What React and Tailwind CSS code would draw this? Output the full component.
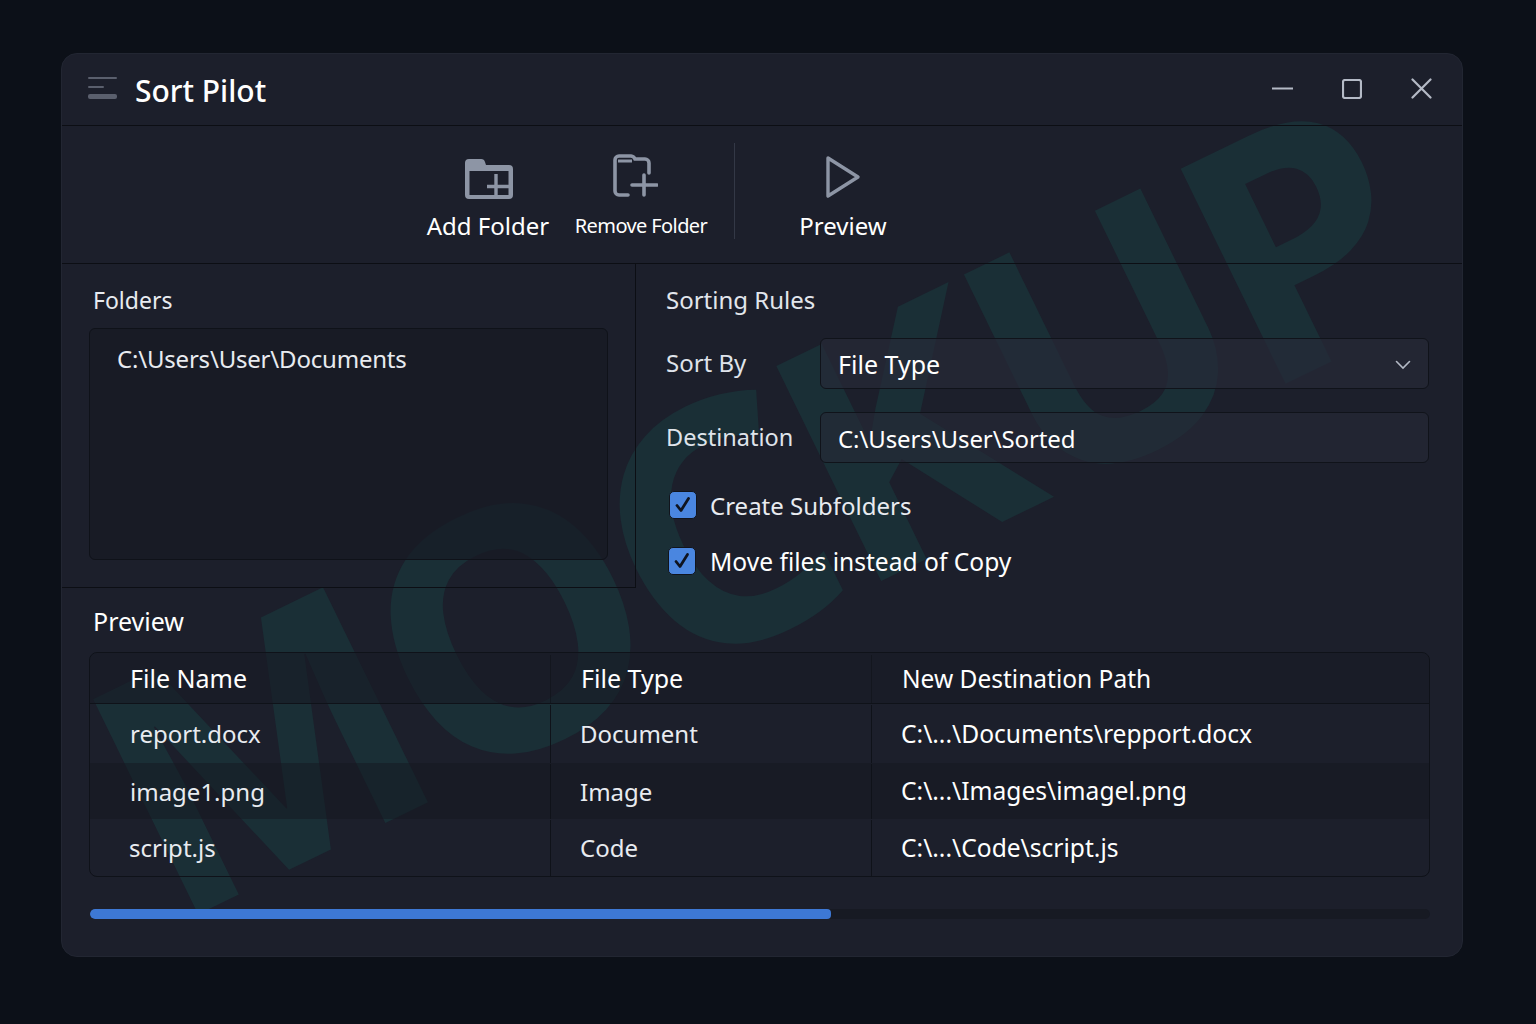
const FONT = "font-['Noto_Sans','Open_Sans',sans-serif]";

function Check() {
  return (
    <span className="-mt-[3px] flex h-[28px] w-[28px] shrink-0 items-center justify-center rounded-[5px] border border-[#11141c] bg-[#4a86e0]">
      <svg width="20" height="20" viewBox="0 0 20 20" fill="none">
        <path d="M4 10.5 L8 15.5 L15.5 3.5" stroke="#0f1420" strokeWidth="2.8" strokeLinecap="round" strokeLinejoin="round" />
      </svg>
    </span>
  );
}

const rows = [
  ["report.docx", "Document", "C:\\...\\Documents\\repport.docx", "h-[59px]", "bg-transparent", "pl-[40px]"],
  ["image1.png", "Image", "C:\\...\\Images\\imagel.png", "h-[56px]", "bg-[#14171f]/50", "pl-[40px]"],
  ["script.js", "Code", "C:\\...\\Code\\script.js", "h-[57px]", "bg-transparent", "pl-[39px]"],
];

export default function App() {
  return (
    <div className={`${FONT} flex h-[1024px] w-full flex-col bg-[#0c1018] px-[61px] pb-[67px] pt-[53px] text-[#eef1f5]`}>
      <div className="relative flex h-[904px] w-[1402px] flex-col overflow-hidden rounded-[16px] border border-[#222632] bg-[#1c1f2b]">
        <div className="pointer-events-none absolute left-[-19px] top-[281px] origin-center -rotate-[26deg] select-none whitespace-nowrap text-[335px] font-bold leading-none tracking-[-12px] text-[#1a2f36]">
          MOCKUP
        </div>
        <div className="relative flex h-[72px] items-center border-b border-[#0c0e14] pl-[26px] pr-[30px]">
          <svg width="30" height="24" viewBox="0 0 30 24" className="mr-[18px] mt-[-4px]">
            <rect x="0" y="1" width="29" height="2" rx="1" fill="#5a5f6d" />
            <rect x="0" y="10" width="16" height="2" rx="1" fill="#5a5f6d" />
            <rect x="0" y="18" width="29" height="5" rx="2" fill="#5a5f6d" />
          </svg>
          <span className="ml-[-1px] mt-[2px] text-[30px] font-medium leading-none text-white">Sort Pilot</span>
          <div className="ml-auto mt-[-2px] flex items-center gap-[49px] text-[#b4bac6]">
            <svg width="21" height="21" viewBox="0 0 21 21"><path d="M0 10.5H21" stroke="currentColor" strokeWidth="2.2" strokeLinecap="round" /></svg>
            <svg width="20" height="20" viewBox="0 0 20 20" fill="none"><rect x="1" y="1" width="18" height="18" rx="2" stroke="currentColor" strokeWidth="2.2" /></svg>
            <svg width="21" height="21" viewBox="0 0 21 21" fill="none"><path d="M1.5 1.5L19.5 19.5M19.5 1.5L1.5 19.5" stroke="currentColor" strokeWidth="2.2" strokeLinecap="round" /></svg>
          </div>
        </div>

        <div className="relative flex h-[138px] items-start border-b border-[#0c0e14] pl-[353px]">
          <div className="flex h-full w-[146px] flex-col items-center pt-[31px]">
            <svg width="50" height="44" viewBox="0 0 50 44" fill="none" className="ml-[2px]">
              <path d="M1 6a4 4 0 0 1 4-4h12a4 4 0 0 1 4 3l1 3h23a4 4 0 0 1 4 4v26a4 4 0 0 1-4 4H5a4 4 0 0 1-4-4Z" fill="#8d95a5" />
              <path d="M5.5 14h39v24h-39Z" fill="#1c1f2b" />
              <path d="M32 17v24M23 29.5h24" stroke="#8d95a5" strokeWidth="3.4" />
            </svg>
            <span className="mt-[8px] whitespace-nowrap text-[24px] leading-[34px] text-white">Add Folder</span>
          </div>
          <div className="flex h-full w-[160px] flex-col items-center pt-[27px]">
            <svg width="46" height="46" viewBox="0 0 46 46" fill="none" className="ml-[-12px]">
              <path d="M16 42H7a4 4 0 0 1-4-4V7a4 4 0 0 1 4-4h12a5 5 0 0 1 4 3h10a4 4 0 0 1 4 4v10" stroke="#8d95a5" strokeWidth="3.6" strokeLinecap="round" />
              <path d="M6 8h14" stroke="#8d95a5" strokeWidth="3" />
              <path d="M32 22v20M20 32h25" stroke="#8d95a5" strokeWidth="3.6" strokeLinecap="round" />
            </svg>
            <span className="mt-[10px] whitespace-nowrap text-[20px] leading-[34px] tracking-[-0.6px] text-white">Remove Folder</span>
          </div>
          <div className="ml-[13px] mt-[17px] h-[96px] w-px bg-[#333846]" />
          <div className="ml-[36px] flex h-full w-[144px] flex-col items-center pt-[29px]">
            <svg width="36" height="44" viewBox="0 0 36 44" fill="none">
              <path d="M3 3L33 22L3 41Z" stroke="#8d95a5" strokeWidth="3.4" strokeLinejoin="round" />
            </svg>
            <span className="mt-[10px] text-[24px] leading-[34px] text-white">Preview</span>
          </div>
        </div>

        <div className="relative flex h-[324px]">
          <div className="flex w-[574px] flex-col border-b border-r border-[#0c0e14] pl-[27px] pr-[27px]">
            <div className="pl-[4px] pt-[19px] text-[23px] leading-[34px] text-[#e8ebf0]">Folders</div>
            <div className="mt-[11px] h-[232px] rounded-[6px] border border-[#0f1219] bg-[#171a24]/70 pl-[27px] pt-[13px] text-[24px] leading-[34px] tracking-[-0.2px] text-[#e8ebf0]">
              {"C:\\Users\\User\\Documents"}
            </div>
          </div>
          <div className="flex flex-1 flex-col pl-[30px] pr-[33px]">
            <div className="pt-[19px] text-[24px] leading-[34px] text-[#e2e6ec]">Sorting Rules</div>
            <div className="mt-[21px] flex h-[51px] items-center">
              <span className="-mt-[2px] w-[154px] text-[24px] text-[#dfe3ea]">Sort By</span>
              <div className="flex h-full flex-1 items-center justify-between rounded-[6px] border border-[#10131a] bg-[#272a37]/70 pl-[17px] pr-[17px] pt-[2px] text-[25px] text-white">
                File Type
                <svg width="16" height="10" viewBox="0 0 16 10" fill="none"><path d="M1.5 1.5L8 8L14.5 1.5" stroke="#b4bac6" strokeWidth="1.6" strokeLinecap="round" /></svg>
              </div>
            </div>
            <div className="mt-[23px] flex h-[51px] items-center">
              <span className="w-[154px] text-[23.5px] text-[#dfe3ea]">Destination</span>
              <div className="flex h-full flex-1 items-center rounded-[6px] border border-[#10131a] bg-[#272a37]/60 pl-[17px] pt-[2px] text-[24px] tracking-[-0.1px] text-white">
                {"C:\\Users\\User\\Sorted"}
              </div>
            </div>
            <label className="ml-[3px] mt-[28px] flex items-center gap-[13px] text-[24px] leading-[30px] text-[#e8ebf0]">
              <Check /> Create Subfolders
            </label>
            <label className="ml-[2px] mt-[26px] flex items-center gap-[14px] text-[24.6px] leading-[30px] text-white">
              <Check /> Move files instead of Copy
            </label>
          </div>
        </div>

        <div className="relative flex flex-1 flex-col pl-[27px] pr-[32px]">
          <div className="pl-[4px] pt-[16px] text-[25px] leading-[34px] text-white">Preview</div>
          <div className="mt-[14px] overflow-hidden rounded-[8px] border border-[#0f1219]">
            <div className="flex h-[51px] items-center border-b border-[#0f1219] bg-[#181b25]/60 pt-[2px] text-[25px] text-white">
              <div className="flex h-full w-[461px] items-center border-r border-[#0f1219]/60 pl-[40px]">File Name</div>
              <div className="flex h-full w-[321px] items-center border-r border-[#0f1219]/60 pl-[30px]">File Type</div>
              <div className="pl-[30px] text-[24.5px]">New Destination Path</div>
            </div>
            {rows.map(([a, b, c, h, bg, pad]) => (
              <div key={a} className={`flex items-center pt-[1px] text-[24px] text-[#e8ebf0] ${h} ${bg}`}>
                <div className={`flex h-full w-[461px] items-center border-r border-[#0f1219] ${pad}`}>{a}</div>
                <div className="flex h-full w-[321px] items-center border-r border-[#0f1219] pl-[29px]">{b}</div>
                <div className="pl-[29px] text-[24.6px] text-white">{c}</div>
              </div>
            ))}
          </div>
          <div className="ml-[1px] mt-[32px] h-[10px] overflow-hidden rounded-full bg-[#171a23]">
            <div className="h-full w-[741px] rounded-[4px] bg-[#3d78d4]" />
          </div>
        </div>
      </div>
    </div>
  );
}
